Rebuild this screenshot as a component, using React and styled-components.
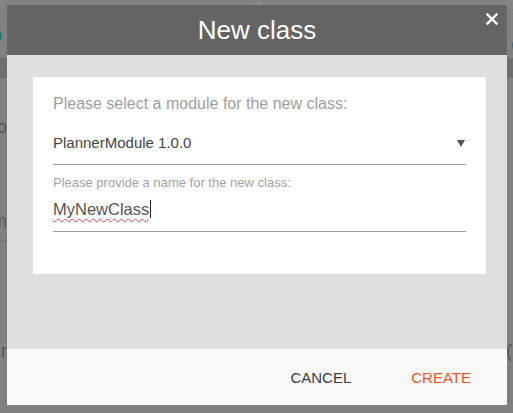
import React from "react";
import styled, { createGlobalStyle } from "styled-components";

const GlobalStyle = createGlobalStyle`
  html, body {
    margin: 0;
    padding: 0;
    background: #808080;
    font-family: "Liberation Sans", Arial, sans-serif;
  }
  * {
    box-sizing: border-box;
  }
`;

// Page dimmed behind the dialog
const Page = styled.div`
  width: 513px;
  height: 413px;
  overflow: hidden;
  background: #808080;
  display: flex;
  flex-direction: column;
`;

const TopStrip = styled.div`
  height: 10px;
  background: #848484;
  border-bottom: 1px solid #787878;
`;

const PageHeader = styled.div`
  height: 48px;
  display: flex;
  justify-content: space-between;
  align-items: center;
`;

const EdgeLetter = styled.span`
  font-size: 20px;
  color: ${({ $color }) => $color || "#555"};
  margin: ${({ $m }) => $m || "0"};
`;

const Band = styled.div`
  height: 20px;
  background: #6e6e6e;
`;

const PageBody = styled.div`
  flex: 1;
  display: flex;
  justify-content: space-between;
`;

const EdgeColumn = styled.div`
  width: 7px;
  overflow: hidden;
  display: flex;
  flex-direction: column;
  align-items: ${({ $right }) => ($right ? "flex-start" : "flex-end")};
`;

const EdgeRow = styled.div`
  height: ${({ $h }) => $h}px;
  display: flex;
  align-items: flex-end;
  justify-content: ${({ $right }) => ($right ? "flex-start" : "flex-end")};
  white-space: nowrap;
  font-size: ${({ $size }) => $size || 18}px;
  color: #595959;
  line-height: 1;
`;

// Dialog
const Modal = styled.div`
  position: fixed;
  top: 5px;
  left: 7px;
  width: 500px;
  height: 400px;
  display: flex;
  flex-direction: column;

  &::before {
    content: "";
    position: absolute;
    top: -5px;
    left: 246px;
    border-left: 5px solid transparent;
    border-right: 5px solid transparent;
    border-bottom: 5px solid #8b8b8b;
  }
`;

const Header = styled.div`
  position: relative;
  height: 50px;
  background: #646464;
  color: #fff;
  font-size: 26px;
  line-height: 50px;
  text-align: center;
`;

const CloseButton = styled.button`
  position: absolute;
  top: 8px;
  right: 9px;
  width: 12px;
  height: 12px;
  padding: 0;
  border: none;
  background: none;
  cursor: pointer;
  display: flex;
`;

const Body = styled.div`
  height: 294px;
  background: #dfdfdf;
  padding: 22px 21px 0 26px;
`;

const Card = styled.div`
  background: #fff;
  height: 197px;
  padding: 18px 20px 0 20px;
  display: flex;
  flex-direction: column;
`;

const Label = styled.div`
  font-size: ${({ $small }) => ($small ? 13 : 16)}px;
  line-height: ${({ $small }) => ($small ? 15 : 18)}px;
  color: ${({ $small }) => ($small ? "#a3a3a3" : "#9e9e9e")};
  margin-top: ${({ $mt }) => $mt || 0}px;
`;

const Field = styled.div`
  display: flex;
  align-items: center;
  justify-content: space-between;
  border-bottom: 1px solid #9e9e9e;
  font-size: ${({ $size }) => $size || 16}px;
  line-height: 18px;
  color: ${({ $color }) => $color};
  margin-top: ${({ $mt }) => $mt || 0}px;
  padding: ${({ $pad }) => $pad};
`;

const Value = styled.span`
  display: flex;
  align-items: center;
`;

const Misspelled = styled.span`
  text-decoration: underline wavy #e4434a;
  text-decoration-thickness: 1px;
  text-underline-offset: 3px;
`;

const Caret = styled.span`
  display: inline-block;
  width: 1px;
  height: 18px;
  background: #222;
  margin-left: 1px;
`;

const Footer = styled.div`
  height: 56px;
  background: #f9f9f9;
  display: flex;
  align-items: center;
  justify-content: flex-end;
  gap: 28px;
  padding-right: 20px;
`;

const FooterButton = styled.button`
  border: none;
  background: none;
  padding: 0 16px;
  height: 36px;
  font-family: inherit;
  font-size: 15px;
  color: ${({ $primary }) => ($primary ? "#e8552d" : "#3a3a3a")};
  cursor: pointer;
`;

export default function App() {
  return (
    <>
      <GlobalStyle />
      <Page>
        <TopStrip />
        <PageHeader>
          <EdgeLetter $color="#1f6f7d" $m="0 0 0 -9px">o</EdgeLetter>
          <EdgeLetter $color="#1f6f7d" $m="20px -9px 0 0">o</EdgeLetter>
        </PageHeader>
        <Band />
        <PageBody>
          <EdgeColumn>
            <EdgeRow $h={58}>vo</EdgeRow>
            <EdgeRow $h={94}>m</EdgeRow>
            <EdgeRow $h={14} $size={12}>...</EdgeRow>
            <EdgeRow $h={116}>r</EdgeRow>
          </EdgeColumn>
          <EdgeColumn $right>
            <EdgeRow $h={282} $right>(</EdgeRow>
          </EdgeColumn>
        </PageBody>
      </Page>

      <Modal>
        <Header>
          New class
          <CloseButton aria-label="Close">
            <svg width="12" height="12" viewBox="0 0 12 12">
              <path d="M1.5 1.5 L10.5 10.5 M10.5 1.5 L1.5 10.5" stroke="#fff" strokeWidth="2.4" strokeLinecap="square" />
            </svg>
          </CloseButton>
        </Header>
        <Body>
          <Card>
            <Label>Please select a module for the new class:</Label>
            <Field $color="#444" $size={15} $mt={7} $pad="14px 0 12px 0">
              <Value>PlannerModule 1.0.0</Value>
              <svg width="8" height="7" viewBox="0 0 8 7" style={{ marginRight: 1 }}>
                <path d="M0 0 H8 L4 7 Z" fill="#555" />
              </svg>
            </Field>
            <Label $small $mt={10}>Please provide a name for the new class:</Label>
            <Field $color="#555" $size={16.5} $pad="10px 0 13px 0">
              <Value>
                <Misspelled>MyNewClass</Misspelled>
                <Caret />
              </Value>
            </Field>
          </Card>
        </Body>
        <Footer>
          <FooterButton>CANCEL</FooterButton>
          <FooterButton $primary>CREATE</FooterButton>
        </Footer>
      </Modal>
    </>
  );
}
